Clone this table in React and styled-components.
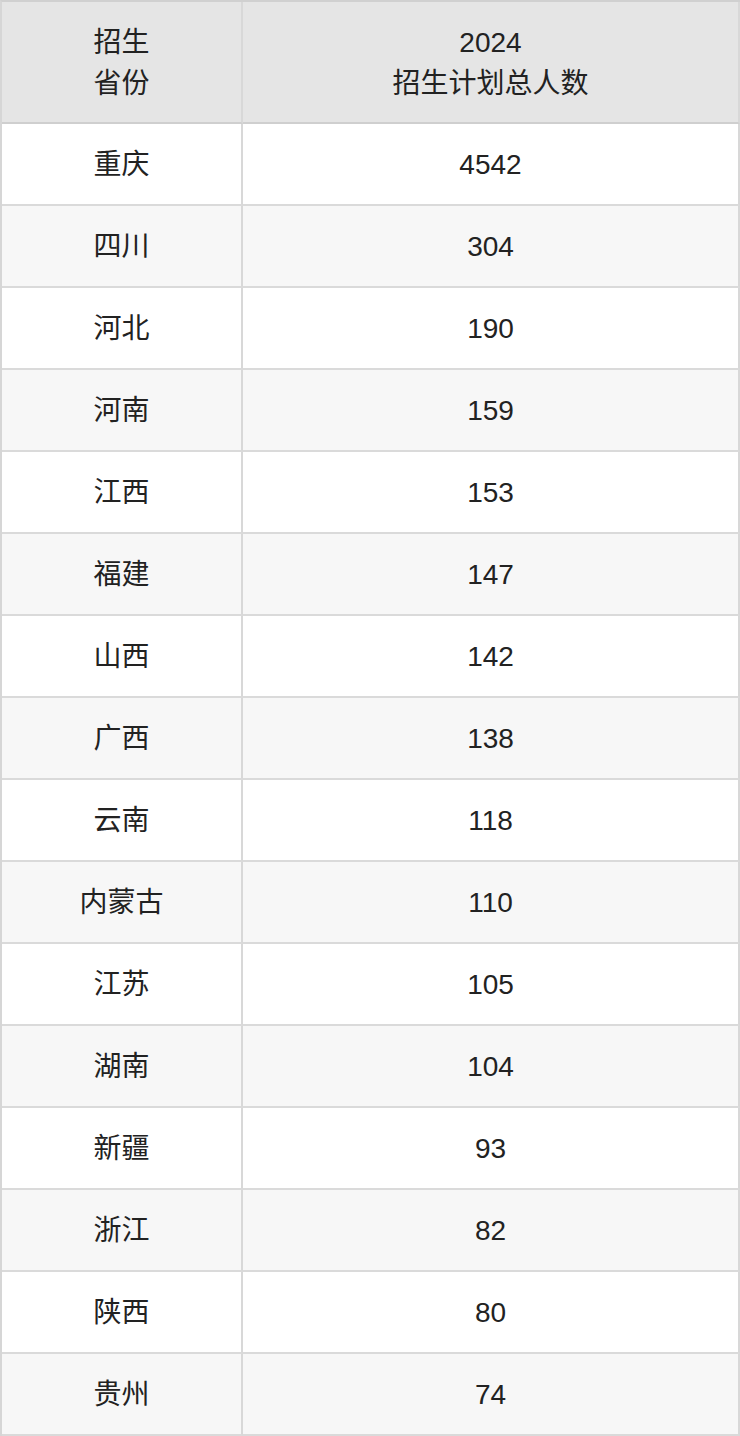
import React from "react";
import styled, { createGlobalStyle } from "styled-components";

const Global = createGlobalStyle`
  html, body { margin: 0; padding: 0; background: #fff; }
  body { font-family: "Liberation Sans", "Noto Sans CJK SC", sans-serif; }
`;

const Table = styled.div`
  width: 740px;
  display: grid;
  grid-template-columns: 241px 497px;
  border-top: 2px solid #d0d0d0;
  border-left: 2px solid #d6d6d6;
  box-sizing: border-box;
  color: #222;
  font-size: 28px;
`;

const Cell = styled.div`
  box-sizing: border-box;
  height: ${(p) => (p.$head ? 122 : 82)}px;
  border-right: 2px solid #d8d8d8;
  border-bottom: 2px solid ${(p) => (p.$head ? "#cfcfcf" : "#dadada")};
  background: ${(p) => (p.$head ? "#e5e5e5" : p.$alt ? "#f7f7f7" : "#ffffff")};
  display: flex;
  align-items: center;
  justify-content: center;
  text-align: center;
  line-height: 41px;
  padding-top: ${(p) => (p.$head ? 2 : 0)}px;
`;

const rows = [
  ["重庆", "4542"],
  ["四川", "304"],
  ["河北", "190"],
  ["河南", "159"],
  ["江西", "153"],
  ["福建", "147"],
  ["山西", "142"],
  ["广西", "138"],
  ["云南", "118"],
  ["内蒙古", "110"],
  ["江苏", "105"],
  ["湖南", "104"],
  ["新疆", "93"],
  ["浙江", "82"],
  ["陕西", "80"],
  ["贵州", "74"],
];

export default function App() {
  return (
    <>
      <Global />
      <Table>
        <Cell $head>
          招生
          <br />
          省份
        </Cell>
        <Cell $head>
          2024
          <br />
          招生计划总人数
        </Cell>
        {rows.map(([p, n], i) => (
          <React.Fragment key={p}>
            <Cell $alt={i % 2 === 1}>{p}</Cell>
            <Cell $alt={i % 2 === 1}>{n}</Cell>
          </React.Fragment>
        ))}
      </Table>
    </>
  );
}
